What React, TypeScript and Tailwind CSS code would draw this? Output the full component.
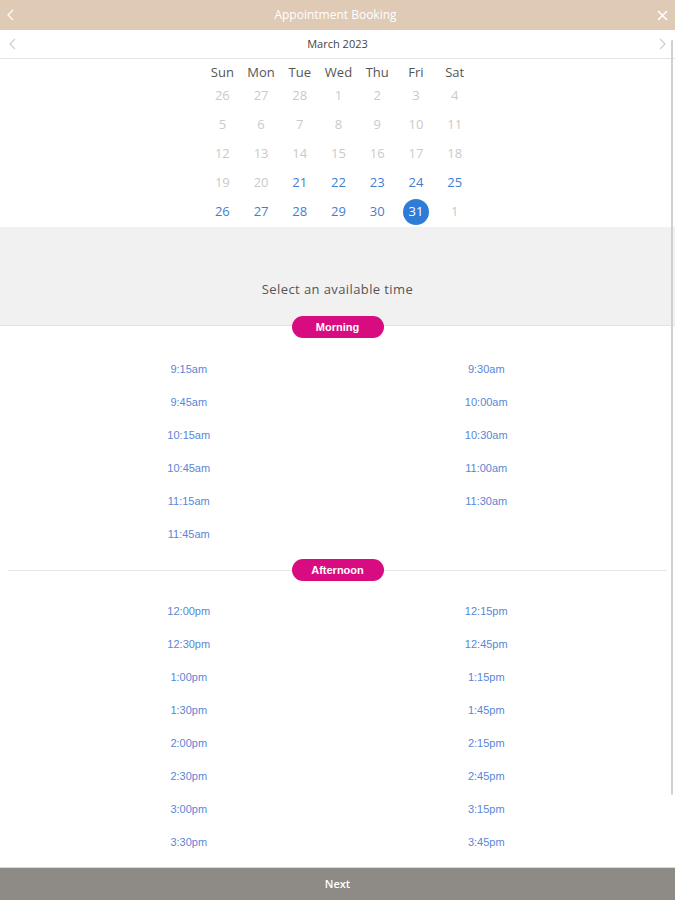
import React from 'react';

const weekDays = ['Sun', 'Mon', 'Tue', 'Wed', 'Thu', 'Fri', 'Sat'];

// calendar cells: [label, state] where state is 'off' | 'on' | 'sel'
const weeks: [string, string][][] = [
  [['26', 'off'], ['27', 'off'], ['28', 'off'], ['1', 'off'], ['2', 'off'], ['3', 'off'], ['4', 'off']],
  [['5', 'off'], ['6', 'off'], ['7', 'off'], ['8', 'off'], ['9', 'off'], ['10', 'off'], ['11', 'off']],
  [['12', 'off'], ['13', 'off'], ['14', 'off'], ['15', 'off'], ['16', 'off'], ['17', 'off'], ['18', 'off']],
  [['19', 'off'], ['20', 'off'], ['21', 'on'], ['22', 'on'], ['23', 'on'], ['24', 'on'], ['25', 'on']],
  [['26', 'on'], ['27', 'on'], ['28', 'on'], ['29', 'on'], ['30', 'on'], ['31', 'sel'], ['1', 'off']],
];

const morning = ['9:15am', '9:30am', '9:45am', '10:00am', '10:15am', '10:30am', '10:45am', '11:00am', '11:15am', '11:30am', '11:45am'];
const afternoon = [
  '12:00pm', '12:15pm', '12:30pm', '12:45pm', '1:00pm', '1:15pm', '1:30pm', '1:45pm',
  '2:00pm', '2:15pm', '2:30pm', '2:45pm', '3:00pm', '3:15pm', '3:30pm', '3:45pm',
];

const Chevron = ({ dir, className }: { dir: 'left' | 'right'; className?: string }) => (
  <svg width="7" height="12" viewBox="0 0 7 12" className={className} fill="none" stroke="currentColor" strokeWidth="1.2">
    {dir === 'left' ? <path d="M6 1 1 6l5 5" /> : <path d="M1 1l5 5-5 5" />}
  </svg>
);

const Pill = ({ label }: { label: string }) => (
  <div className="flex h-[22px] w-[92px] items-center justify-center rounded-full bg-[#d80c80] text-[11px] font-bold text-white" style={{ fontFamily: '"Liberation Sans", Arial, sans-serif' }}>
    {label}
  </div>
);

const TimeGrid = ({ slots }: { slots: string[] }) => (
  <div className="grid grid-cols-2 px-[40px]" style={{ fontFamily: '"Liberation Sans", Arial, sans-serif' }}>
    {slots.map((t) => (
      <div key={t} className="flex h-[33px] items-center justify-center text-[11px] text-[#5a86d6]">
        {t}
      </div>
    ))}
  </div>
);

export default function App() {
  return (
    <div className="relative flex h-[900px] w-[675px] flex-col overflow-hidden bg-white" style={{ fontFamily: '"Open Sans", sans-serif' }}>
      {/* title bar */}
      <div className="flex h-[30px] items-center justify-between bg-[#dfcab5] px-[7px] text-white">
        <Chevron dir="left" />
        <span className="text-[12px]">Appointment Booking</span>
        <svg width="11" height="11" viewBox="0 0 11 11" stroke="currentColor" strokeWidth="1.6">
          <path d="M1 1l9 9M10 1l-9 9" />
        </svg>
      </div>

      <div className="flex-1 overflow-hidden">
        {/* month bar */}
        <div className="flex h-[29px] items-center justify-between border-b border-[#e4e4e4] px-[9px] text-[#cfcfcf]">
          <Chevron dir="left" />
          <span className="text-[11px] text-[#444]">March 2023</span>
          <Chevron dir="right" />
        </div>

        {/* calendar */}
        <div className="mx-auto w-[273px] pl-[2px]">
          <div className="grid h-[22px] grid-cols-7 text-center text-[13px] leading-[26px] text-[#555]">
            {weekDays.map((d) => (
              <span key={d}>{d}</span>
            ))}
          </div>
          {weeks.map((w, i) => (
            <div key={i} className="grid h-[29px] grid-cols-7 items-center text-[13px]">
              {w.map(([n, s], j) => (
                <div key={j} className="flex justify-center">
                  {s === 'sel' ? (
                    <span className="flex h-[26px] w-[26px] items-center justify-center rounded-full bg-[#2f7cd8] text-white">{n}</span>
                  ) : (
                    <span className={s === 'on' ? 'text-[#3f7ed4]' : 'text-[#cacaca]'}>{n}</span>
                  )}
                </div>
              ))}
            </div>
          ))}
        </div>

        {/* select prompt */}
        <div className="mt-[1px] flex h-[99px] items-end justify-center border-b border-[#e2e2e2] bg-[#f1f1f1] pb-[26px]">
          <span className="text-[13px] tracking-[0.4px] text-[#555]">Select an available time</span>
        </div>

        <div className="-mt-[10px] flex justify-center">
          <Pill label="Morning" />
        </div>
        <div className="mt-[15px]">
          <TimeGrid slots={morning} />
        </div>

        <div className="mx-[8px] mt-[8px] flex items-center">
          <div className="h-px flex-1 bg-[#e6e6e6]" />
          <Pill label="Afternoon" />
          <div className="h-px flex-1 bg-[#e6e6e6]" />
        </div>
        <div className="mt-[14px]">
          <TimeGrid slots={afternoon} />
        </div>
      </div>

      {/* next button */}
      <div className="flex h-[33px] items-center justify-center border-t border-[#d8d8d8] bg-[#8e8b87] text-[11px] font-semibold text-white">
        Next
      </div>

      {/* scroll indicator */}
      <div className="absolute right-[2px] top-[40px] h-[755px] w-[2px] rounded-full bg-[#d0d0d0]" />
    </div>
  );
}
